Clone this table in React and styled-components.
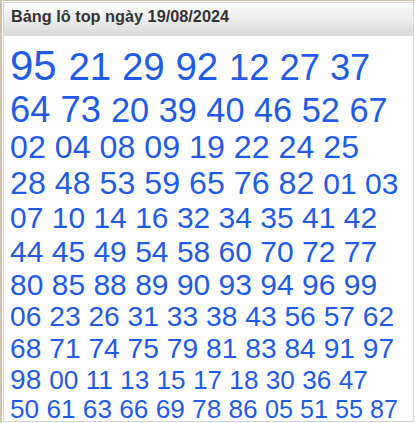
import React from 'react'
import styled, { createGlobalStyle } from 'styled-components'

const GlobalStyle = createGlobalStyle`
  html, body {
    margin: 0;
    padding: 0;
    background: #fff;
  }
  body {
    font-family: "Liberation Sans", Arial, sans-serif;
  }
`

const Page = styled.div`
  width: 415px;
  height: 423px;
  box-sizing: border-box;
  border-top: 1px solid #cdc1b0;
  border-left: 2px solid #cdc1b0;
  padding: 1px 1px 0 1px;
  overflow: hidden;
`

const Box = styled.div`
  height: 420px;
  box-sizing: border-box;
  border: 1px solid #d4d4d4;
  background: #fff;
  overflow: hidden;
`

const Header = styled.div`
  height: 33px;
  box-sizing: border-box;
  padding: 4px 0 0 7px;
  background: linear-gradient(to bottom, #fafafa 0%, #ececec 55%, #d7d7d7 100%);
  color: #333;
  font-size: 16.3px;
  font-weight: bold;
`

const Numbers = styled.div`
  padding: 7px 12px 0 6px;
  font-size: 16px;
  line-height: 1.11;
  color: #1f5be6;
`

const Num = styled.span`
  font-size: ${({ $size }) => $size}px;
`

// font size per group, largest first (sorted by how often the number came up)
const groups = [
  [42, ['95']],
  [38.5, ['21', '29', '92']],
  [36.3, ['12', '27', '37', '64', '73']],
  [34.3, ['20', '39', '40', '46', '52', '67']],
  [32.2, ['02', '04', '08', '09', '19', '22', '24', '25', '28', '48', '53', '59', '65', '76', '82']],
  [30, ['01', '03', '07', '10', '14', '16', '32', '34', '35', '41', '42', '44', '45', '49', '54', '58', '60', '70', '72', '77', '80', '85', '88', '89', '90', '93', '94', '96', '99']],
  [28.2, ['06', '23', '26', '31', '33', '38', '43', '56', '57', '62', '68', '71', '74', '75', '79', '81', '83', '84', '91', '97', '98']],
  [26.2, ['00', '11', '13', '15', '17', '18', '30', '36', '47', '50', '61', '63', '66', '69', '78', '86']],
  [25.2, ['05', '51', '55', '87']],
]

const App = () => {
  return (
    <>
      <GlobalStyle />
      <Page>
        <Box>
          <Header>Bảng lô top ngày 19/08/2024</Header>
          <Numbers>
            {groups.map(([size, nums]) =>
              nums.map((n) => (
                <Num key={n} $size={size}>{n} </Num>
              ))
            )}
          </Numbers>
        </Box>
      </Page>
    </>
  )
}

export default App
